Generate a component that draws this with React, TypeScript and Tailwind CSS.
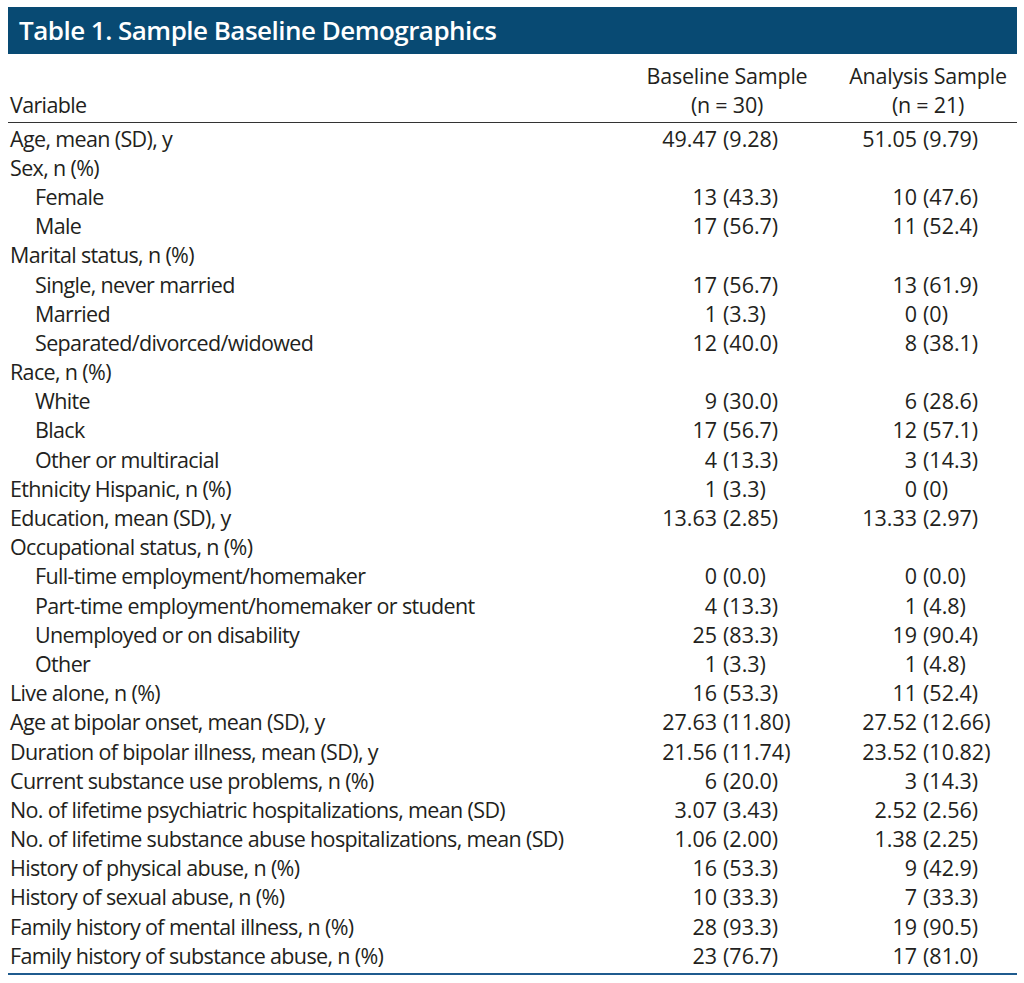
type Row = { label: string; indent?: boolean; a?: [string, string]; b?: [string, string] };

const rows: Row[] = [
  { label: "Age, mean (SD), y", a: ["49.47", "(9.28)"], b: ["51.05", "(9.79)"] },
  { label: "Sex, n (%)" },
  { label: "Female", indent: true, a: ["13", "(43.3)"], b: ["10", "(47.6)"] },
  { label: "Male", indent: true, a: ["17", "(56.7)"], b: ["11", "(52.4)"] },
  { label: "Marital status, n (%)" },
  { label: "Single, never married", indent: true, a: ["17", "(56.7)"], b: ["13", "(61.9)"] },
  { label: "Married", indent: true, a: ["1", "(3.3)"], b: ["0", "(0)"] },
  { label: "Separated/divorced/widowed", indent: true, a: ["12", "(40.0)"], b: ["8", "(38.1)"] },
  { label: "Race, n (%)" },
  { label: "White", indent: true, a: ["9", "(30.0)"], b: ["6", "(28.6)"] },
  { label: "Black", indent: true, a: ["17", "(56.7)"], b: ["12", "(57.1)"] },
  { label: "Other or multiracial", indent: true, a: ["4", "(13.3)"], b: ["3", "(14.3)"] },
  { label: "Ethnicity Hispanic, n (%)", a: ["1", "(3.3)"], b: ["0", "(0)"] },
  { label: "Education, mean (SD), y", a: ["13.63", "(2.85)"], b: ["13.33", "(2.97)"] },
  { label: "Occupational status, n (%)" },
  { label: "Full-time employment/homemaker", indent: true, a: ["0", "(0.0)"], b: ["0", "(0.0)"] },
  { label: "Part-time employment/homemaker or student", indent: true, a: ["4", "(13.3)"], b: ["1", "(4.8)"] },
  { label: "Unemployed or on disability", indent: true, a: ["25", "(83.3)"], b: ["19", "(90.4)"] },
  { label: "Other", indent: true, a: ["1", "(3.3)"], b: ["1", "(4.8)"] },
  { label: "Live alone, n (%)", a: ["16", "(53.3)"], b: ["11", "(52.4)"] },
  { label: "Age at bipolar onset, mean (SD), y", a: ["27.63", "(11.80)"], b: ["27.52", "(12.66)"] },
  { label: "Duration of bipolar illness, mean (SD), y", a: ["21.56", "(11.74)"], b: ["23.52", "(10.82)"] },
  { label: "Current substance use problems, n (%)", a: ["6", "(20.0)"], b: ["3", "(14.3)"] },
  { label: "No. of lifetime psychiatric hospitalizations, mean (SD)", a: ["3.07", "(3.43)"], b: ["2.52", "(2.56)"] },
  { label: "No. of lifetime substance abuse hospitalizations, mean (SD)", a: ["1.06", "(2.00)"], b: ["1.38", "(2.25)"] },
  { label: "History of physical abuse, n (%)", a: ["16", "(53.3)"], b: ["9", "(42.9)"] },
  { label: "History of sexual abuse, n (%)", a: ["10", "(33.3)"], b: ["7", "(33.3)"] },
  { label: "Family history of mental illness, n (%)", a: ["28", "(93.3)"], b: ["19", "(90.5)"] },
  { label: "Family history of substance abuse, n (%)", a: ["23", "(76.7)"], b: ["17", "(81.0)"] },
];

function Value({ v }: { v?: [string, string] }) {
  return (
    <div className="flex tracking-normal">
      <span className="w-[100px] text-right">{v ? v[0] : ""}</span>
      <span className="w-[100px] pl-[6px]">{v ? v[1] : ""}</span>
    </div>
  );
}

export default function App() {
  return (
    <div
      className="min-h-screen bg-white pt-[7px] pl-[8px] text-[#231f20]"
      style={{ fontFamily: '"Open Sans", "Liberation Sans", sans-serif' }}
    >
      <div className="w-[1009px]">
        {/* Title */}
        <div className="h-[47px] bg-[#084a73] pl-[11px] flex items-center">
          <h1 className="text-white font-semibold text-[26px] tracking-[-0.02em]">
            Table 1. Sample Baseline Demographics
          </h1>
        </div>

        <div className="text-[21.5px] tracking-[-0.03em]">
          {/* Column headers */}
          <div className="h-[69px] flex items-end pb-[3px] leading-[29px] border-b border-[#333]">
            <div className="w-[612px] pl-[2px]">Variable</div>
            <div className="w-[214px] text-center tracking-[-0.01em]">
              <div>Baseline Sample</div>
              <div>(n = 30)</div>
            </div>
            <div className="ml-[5px] w-[178px] text-center tracking-[-0.01em]">
              <div>Analysis Sample</div>
              <div>(n = 21)</div>
            </div>
          </div>

          {/* Body */}
          <div className="border-b-2 border-[#1f5b8e] pb-[4px]">
            {rows.map((r, i) => (
              <div key={i} className="h-[29.2px] flex items-center leading-[29px] pt-[1px]">
                <div className={`w-[612px] ${r.indent ? "pl-[27px]" : "pl-[2px]"}`}>{r.label}</div>
                <Value v={r.a} />
                <Value v={r.b} />
              </div>
            ))}
          </div>
        </div>
      </div>
    </div>
  );
}
